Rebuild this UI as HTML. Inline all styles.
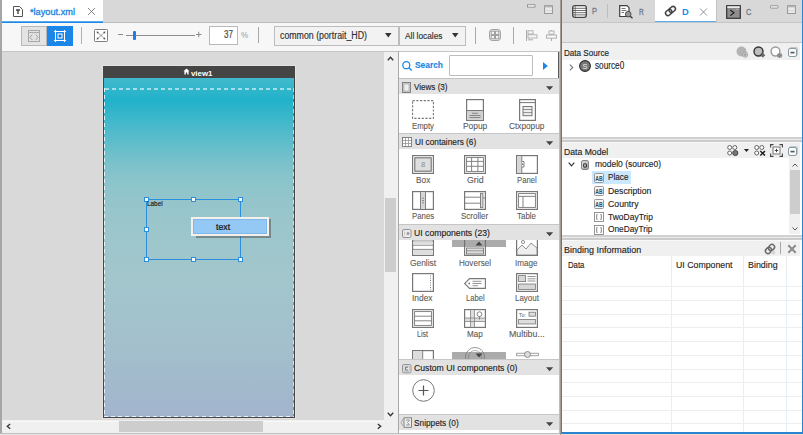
<!DOCTYPE html>
<html><head><meta charset="utf-8">
<style>
*{box-sizing:border-box;margin:0;padding:0}
html,body{width:803px;height:435px;overflow:hidden;background:#d9d9d9;font-family:"Liberation Sans",sans-serif;color:#333}
.a{position:absolute}
.t{position:absolute;white-space:nowrap;line-height:1;}
svg{position:absolute;overflow:visible}
</style></head><body>
<!-- LEFT EDITOR -->
<div class="a" style="left:0;top:0;width:2px;height:435px;background:#a6a6a6"></div>
<div class="a" style="left:2px;top:0;width:558px;height:22px;background:#d8d8d8"></div>
<!-- tab -->
<div class="a" style="left:2px;top:0;width:101px;height:21px;background:#fff"></div>
<div class="a" style="left:2px;top:21px;width:101px;height:2px;background:linear-gradient(#5aaaee 0 1px,#1c8ae5 1px 2px)"></div>
<div class="a" style="left:103px;top:22px;width:457px;height:1px;background:#bdbdbd"></div>
<!-- toolbar -->
<div class="a" style="left:2px;top:23px;width:558px;height:28px;background:#f7f7f7"></div>
<div class="a" style="left:2px;top:51px;width:558px;height:1px;background:#c4c4c4"></div>

<!-- tab content -->
<svg style="left:12px;top:5px" width="12" height="13" viewBox="0 0 12 13"><path d="M1.5 1.5 H7.5 L10.5 4.5 V11.5 H1.5 Z" fill="#fff" stroke="#555" stroke-width="1"/><path d="M4 5 H8 M6 5 V9" stroke="#444" stroke-width="1.4"/></svg>

<svg style="left:87px;top:7px" width="9" height="9" viewBox="0 0 9 9"><path d="M1 1 L8 8 M8 1 L1 8" stroke="#7a7a7a" stroke-width="0.9"/></svg>
<!-- toolbar content -->
<div class="a" style="left:21px;top:26px;width:26px;height:20px;background:#e3e3e3;border:1px solid #b8b8b8"></div>
<svg style="left:28px;top:30px" width="12" height="12" viewBox="0 0 12 12"><rect x="0.5" y="0.5" width="11" height="11" fill="none" stroke="#a6a6a6" stroke-width="1"/><path d="M0.5 2.6 H11.5" stroke="#a6a6a6" stroke-width="1"/><path d="M4.3 4.6 L1.8 7.3 L4.3 10 M7.7 4.6 L10.2 7.3 L7.7 10" fill="none" stroke="#a0a0a0" stroke-width="1"/></svg>
<div class="a" style="left:47px;top:26px;width:26px;height:20px;background:#1a86e8"></div>
<svg style="left:53px;top:29px" width="14" height="14" viewBox="0 0 14 14"><path d="M2.5 1 V13 M11.5 1 V13 M1 2.5 H13 M1 11.5 H13" stroke="#fff" stroke-width="1"/><rect x="5" y="5" width="4" height="4" fill="#1a86e8" stroke="#fff" stroke-width="1"/><rect x="6.3" y="6.3" width="1.4" height="1.4" fill="#0a5fb0"/><circle cx="2.5" cy="2.5" r="1" fill="#fff"/><circle cx="11.5" cy="2.5" r="1" fill="#fff"/><circle cx="2.5" cy="11.5" r="1" fill="#fff"/><circle cx="11.5" cy="11.5" r="1" fill="#fff"/></svg>
<div class="a" style="left:81px;top:27px;width:1px;height:17px;background:#b0b0b0"></div>
<svg style="left:94px;top:29px" width="14" height="13" viewBox="0 0 14 13"><rect x="0.5" y="0.5" width="13" height="12" rx="0.8" fill="#fff" stroke="#707070" stroke-width="0.9"/><path d="M3.5 3.2 L10.5 9.8 M10.5 3.2 L3.5 9.8" stroke="#707070" stroke-width="0.7"/><path d="M2.6 2.4 L5 2.9 L3.1 4.8 Z M11.4 2.4 L9 2.9 L10.9 4.8 Z M2.6 10.6 L5 10.1 L3.1 8.2 Z M11.4 10.6 L9 10.1 L10.9 8.2 Z" fill="#555"/></svg>
<div class="a" style="left:118px;top:34px;width:5px;height:1.3px;background:#8a8a8a"></div>
<div class="a" style="left:126px;top:35px;width:69px;height:1px;background:#8c8c8c"></div>
<div class="a" style="left:133px;top:31px;width:3px;height:9px;background:#1a80e6;border-radius:1px"></div>
<svg style="left:196px;top:31px" width="6" height="7" viewBox="0 0 6 7"><path d="M0 3.5 H5.5 M2.75 0.8 V6.2" stroke="#8a8a8a" stroke-width="1"/></svg>
<div class="a" style="left:209px;top:26px;width:29px;height:19px;background:#fff;border:1px solid #b9b9b9"></div>


<div class="a" style="left:258px;top:27px;width:1px;height:16px;background:#a9a9a9"></div>
<div class="a" style="left:274px;top:26px;width:125px;height:20px;background:#f2f2f2;border:1px solid #bcbcbc"></div>

<svg style="left:385px;top:33px" width="7" height="5" viewBox="0 0 7 5"><path d="M0 0 H6.5 L3.25 4.5 Z" fill="#333"/></svg>
<div class="a" style="left:399px;top:26px;width:67px;height:20px;background:#f2f2f2;border:1px solid #bcbcbc"></div>

<svg style="left:452px;top:33px" width="7" height="5" viewBox="0 0 7 5"><path d="M0 0 H6.5 L3.25 4.5 Z" fill="#333"/></svg>
<div class="a" style="left:475px;top:27px;width:1px;height:17px;background:#a9a9a9"></div>
<svg style="left:489px;top:29px" width="12" height="12" viewBox="0 0 12 12"><rect x="0.6" y="0.6" width="10.8" height="10.8" rx="2.5" fill="#f4f4f4" stroke="#999" stroke-width="1"/><rect x="2.2" y="2.2" width="3.3" height="3.3" fill="none" stroke="#999" stroke-width="0.9"/><rect x="6.5" y="2.2" width="3.3" height="3.3" fill="none" stroke="#999" stroke-width="0.9"/><rect x="2.2" y="6.5" width="3.3" height="3.3" fill="none" stroke="#999" stroke-width="0.9"/><rect x="6.5" y="6.5" width="3.3" height="3.3" fill="none" stroke="#999" stroke-width="0.9"/></svg>
<div class="a" style="left:513px;top:27px;width:1px;height:17px;background:#a9a9a9"></div>
<svg style="left:526px;top:30px" width="12" height="11" viewBox="0 0 12 11"><path d="M0.5 0 V11" stroke="#aaa"/><rect x="2" y="0.8" width="5" height="3.2" fill="none" stroke="#aaa" stroke-width="0.9"/><rect x="2" y="4.8" width="9" height="3.2" fill="none" stroke="#aaa" stroke-width="0.9"/><path d="M2 9.8 H7" stroke="#aaa"/></svg>
<svg style="left:546px;top:30px" width="11" height="11" viewBox="0 0 11 11"><path d="M5.5 0 V11" stroke="#aaa"/><rect x="3" y="1" width="5" height="3.2" fill="#f7f7f7" stroke="#aaa" stroke-width="0.9"/><rect x="0.5" y="5" width="10" height="3.2" fill="#f7f7f7" stroke="#aaa" stroke-width="0.9"/></svg>
<!-- min/max left -->
<svg style="left:527px;top:4px" width="9" height="4" viewBox="0 0 9 4"><rect x="0.5" y="0.7" width="7.5" height="2.4" fill="#f2f2f2" stroke="#888" stroke-width="0.8"/></svg>
<svg style="left:543.5px;top:4.5px" width="9" height="9" viewBox="0 0 9 9"><rect x="0.6" y="0.6" width="7.8" height="7.8" fill="#eaeaea" stroke="#8c8c8c" stroke-width="0.9"/><rect x="0.6" y="0.6" width="7.8" height="1.8" fill="#b5b5b5"/><path d="M0.6 5.5 H8.4" stroke="#c8c8c8" stroke-width="0.6"/></svg>

<!-- canvas -->
<div class="a" style="left:2px;top:52px;width:382px;height:368px;background:#d9d9d9"></div>
<!-- vertical scrollbar -->
<div class="a" style="left:384px;top:52px;width:14px;height:368px;background:#f0f0f0"></div>
<div class="a" style="left:385px;top:198px;width:11px;height:74px;background:#cdcdcd"></div>
<!-- horizontal scrollbar -->
<div class="a" style="left:2px;top:420px;width:396px;height:13px;background:#f0f0f0"></div><div class="a" style="left:2px;top:421px;width:382px;height:1px;background:#f8f8f8"></div>
<div class="a" style="left:119px;top:421px;width:144px;height:11px;background:#cdcdcd"></div>
<div class="a" style="left:0;top:433px;width:560px;height:1px;background:#c0c0c0"></div><div class="a" style="left:0;top:434px;width:560px;height:1px;background:#e4e4e4"></div>
<svg style="left:387px;top:56px" width="7" height="5" viewBox="0 0 7 5"><path d="M0.8 4.2 L3.5 1.2 L6.2 4.2" fill="none" stroke="#333" stroke-width="1.3"/></svg>
<svg style="left:387px;top:412px" width="7" height="5" viewBox="0 0 7 5"><path d="M0.8 0.8 L3.5 3.8 L6.2 0.8" fill="none" stroke="#333" stroke-width="1.3"/></svg>
<svg style="left:376.5px;top:423px" width="5" height="7" viewBox="0 0 5 7"><path d="M0.8 0.9 L3.7 3.3 L0.8 5.7" fill="none" stroke="#333" stroke-width="1.3"/></svg>
<svg style="left:5.5px;top:423px" width="5" height="7" viewBox="0 0 5 7"><path d="M4.2 0.9 L1.3 3.3 L4.2 5.7" fill="none" stroke="#333" stroke-width="1.3"/></svg>



<!-- phone frame -->
<div class="a" style="left:102px;top:65px;width:194px;height:354px;background:#e6e2e0"></div>
<div class="a" style="left:103px;top:66px;width:192px;height:352px;background:#454545"></div>
<div class="a" style="left:104px;top:78px;width:190px;height:339px;background:linear-gradient(to bottom,#42b9cc 0px,#36b7cb 8px,#20b2ca 22px,#4bbacb 50px,#74c0cb 80px,#8ac4cb 100px,#9ac6cb 140px,#a2c6cc 200px,#a3bfcc 270px,#a1b4cc 339px)"></div>
<div class="a" style="left:105px;top:88px;width:188px;height:2px;background:repeating-linear-gradient(to right,rgba(235,250,255,.6) 0 4px,transparent 4px 7px)"></div>
<div class="a" style="left:104px;top:88px;width:1px;height:329px;background:repeating-linear-gradient(to bottom,rgba(245,252,255,.85) 0 4px,transparent 4px 7px)"></div>
<div class="a" style="left:293px;top:88px;width:1px;height:329px;background:repeating-linear-gradient(to bottom,rgba(235,250,255,.6) 0 4px,rgba(40,60,70,.3) 4px 7px)"></div>
<div class="a" style="left:104px;top:416px;width:190px;height:1px;background:repeating-linear-gradient(to right,rgba(245,252,255,.85) 0 4px,transparent 4px 7px)"></div>

<svg style="left:183px;top:68px" width="7" height="7" viewBox="0 0 7 7"><path d="M3.5 0.5 L6.5 3.3 L5.6 3.3 L5.6 6.5 L4.2 6.5 L4.2 4.5 L2.8 4.5 L2.8 6.5 L1.4 6.5 L1.4 3.3 L0.5 3.3 Z" fill="#fff"/></svg>
<!-- selection -->
<div class="a" style="left:146px;top:199px;width:95px;height:61px;border:1px solid #2b8fe0"></div>

<div class="a" style="left:144px;top:197px;width:5px;height:5px;background:#fff;border:1px solid #2b8fe0"></div><div class="a" style="left:191px;top:197px;width:5px;height:5px;background:#fff;border:1px solid #2b8fe0"></div><div class="a" style="left:238px;top:197px;width:5px;height:5px;background:#fff;border:1px solid #2b8fe0"></div><div class="a" style="left:144px;top:227px;width:5px;height:5px;background:#fff;border:1px solid #2b8fe0"></div><div class="a" style="left:238px;top:227px;width:5px;height:5px;background:#fff;border:1px solid #2b8fe0"></div><div class="a" style="left:144px;top:257px;width:5px;height:5px;background:#fff;border:1px solid #2b8fe0"></div><div class="a" style="left:191px;top:257px;width:5px;height:5px;background:#fff;border:1px solid #2b8fe0"></div><div class="a" style="left:238px;top:257px;width:5px;height:5px;background:#fff;border:1px solid #2b8fe0"></div>
<div class="a" style="left:196px;top:219px;width:75px;height:19px;background:#555;opacity:.55"></div>
<div class="a" style="left:191px;top:217px;width:78px;height:19px;background:#fff6f0;border:2px solid #f4f0ec"></div>
<div class="a" style="left:193px;top:219px;width:74px;height:15px;background:#94c8f5;border:1px solid #80b8ee"></div>


<!-- palette -->
<div class="a" style="left:398px;top:51px;width:1px;height:382px;background:#a8a8a8"></div>
<div class="a" style="left:399px;top:52px;width:160px;height:381px;background:#fff"></div>
<div class="a" style="left:559px;top:51px;width:1px;height:382px;background:#bcbcbc"></div>

<!-- palette content -->
<svg style="left:402px;top:61px" width="11" height="10" viewBox="0 0 11 10"><circle cx="4.3" cy="4.2" r="3.5" fill="none" stroke="#1a8ae6" stroke-width="1.3"/><path d="M6.8 6.7 L9.8 9.5" stroke="#1a8ae6" stroke-width="1.5"/></svg>

<div class="a" style="left:449px;top:55px;width:84px;height:21px;background:#fff;border:1px solid #bdbdbd;border-radius:1px"></div>
<svg style="left:543px;top:62px" width="5" height="8" viewBox="0 0 5 8"><path d="M0 0 L4.8 4 L0 8 Z" fill="#1a86e8"/></svg>
<div class="a" style="left:399px;top:78px;width:160px;height:1px;background:#c2c2c2"></div>
<div class="a" style="left:399px;top:79px;width:160px;height:15px;background:#e2e2e2"></div>
<svg style="left:402px;top:82px" width="9" height="11" viewBox="0 0 9 11"><rect x="0.5" y="0.5" width="8" height="10" fill="#d0d0d0" stroke="#7a7a7a" stroke-width="0.9"/><rect x="2" y="2" width="5" height="7" fill="#eee" stroke="#999" stroke-width="0.6"/></svg>

<svg style="left:546px;top:86px" width="8" height="5" viewBox="0 0 8 5"><path d="M0 0.3 H7.2 L3.6 4.2 Z" fill="#444"/></svg>
<svg style="left:412.0px;top:100px" width="22" height="19" viewBox="0 0 22 19"><rect x="0.6" y="0.6" width="20.8" height="17.8" fill="#fff" stroke="#777" stroke-width="1.1" stroke-dasharray="2.2 1.5"/></svg><svg style="left:466px;top:99px" width="18" height="22" viewBox="0 0 18 22"><rect x="0.6" y="0.6" width="16.8" height="20.8" fill="#fff" stroke="#777" stroke-width="1.2"/><rect x="1.2" y="11.5" width="15.6" height="9.3" fill="#d0d0d0"/><path d="M1 11.5 H17" stroke="#777" stroke-width="1"/><path d="M6 14.3 H12 M3.5 16.5 H14.5 M3.5 18.5 H14.5" stroke="#777" stroke-width="0.8"/></svg><svg style="left:518.5px;top:99px" width="17" height="22" viewBox="0 0 17 22"><rect x="0.6" y="0.6" width="15.8" height="20.8" fill="#fff" stroke="#777" stroke-width="1.2"/><path d="M1 3.6 H16" stroke="#777" stroke-width="1"/><rect x="4" y="7.5" width="9" height="9.2" fill="#eee" stroke="#777" stroke-width="1"/><path d="M4 10.5 H13 M4 13.6 H13" stroke="#777" stroke-width="0.8"/></svg><div class="a" style="left:399px;top:133px;width:160px;height:1px;background:#c6c6c6"></div>
<div class="a" style="left:399px;top:134px;width:160px;height:15px;background:#e2e2e2"></div>
<svg style="left:402px;top:137px" width="10" height="10" viewBox="0 0 10 10"><rect x="0.5" y="0.5" width="9" height="9" fill="#fff" stroke="#777" stroke-width="0.9"/><path d="M3.5 0.5 V9.5 M6.5 0.5 V9.5 M0.5 3.5 H9.5 M0.5 6.5 H9.5" stroke="#888" stroke-width="0.7"/></svg>

<svg style="left:546px;top:141px" width="8" height="5" viewBox="0 0 8 5"><path d="M0 0.3 H7.2 L3.6 4.2 Z" fill="#444"/></svg>
<svg style="left:412.0px;top:155px" width="22" height="19" viewBox="0 0 22 19"><rect x="0.6" y="0.6" width="20.8" height="17.8" fill="#fff" stroke="#777" stroke-width="1.2"/><rect x="2.8" y="2.8" width="16.4" height="13.4" fill="#dedede" stroke="#666" stroke-width="1"/><text x="11" y="12.3" font-size="7.5" text-anchor="middle" fill="#8a8a8a" font-family="Liberation Sans">8</text></svg><svg style="left:464.0px;top:155px" width="22" height="19" viewBox="0 0 22 19"><rect x="0.6" y="0.6" width="20.8" height="17.8" fill="#fff" stroke="#777" stroke-width="1.2"/><rect x="2.6" y="2.6" width="16.8" height="13.8" fill="#fff" stroke="#777" stroke-width="0.9"/><path d="M7.6 2.6 V16.4 M13.9 2.6 V16.4 M2.6 6.4 H19.4 M2.6 11.3 H19.4" stroke="#777" stroke-width="0.9"/></svg><svg style="left:516.0px;top:155px" width="22" height="19" viewBox="0 0 22 19"><rect x="0.6" y="0.6" width="20.8" height="17.8" fill="#fff" stroke="#777" stroke-width="1.2"/><rect x="1.2" y="1.2" width="4.6" height="16.6" fill="#d6d6d6"/><path d="M5.8 1 V18" stroke="#777" stroke-width="0.9"/><path d="M5.8 6.5 H8 V12 H5.8" fill="#fff" stroke="#777" stroke-width="0.9"/><path d="M6.2 8 L7.5 9.2 L6.2 10.5 Z" fill="#555"/></svg><svg style="left:412.0px;top:191px" width="22" height="19" viewBox="0 0 22 19"><rect x="0.6" y="0.6" width="20.8" height="17.8" fill="#fff" stroke="#777" stroke-width="1.2"/><rect x="8.5" y="1.2" width="5" height="16.6" fill="#d6d6d6"/><path d="M8.5 1 V18 M13.5 1 V18" stroke="#777" stroke-width="0.9"/><path d="M10 7.2 H12 M10 9.5 H12 M10 11.8 H12" stroke="#777" stroke-width="0.8"/></svg><svg style="left:464.0px;top:191px" width="22" height="19" viewBox="0 0 22 19"><rect x="0.6" y="0.6" width="20.8" height="17.8" fill="#fff" stroke="#777" stroke-width="1.2"/><path d="M1 6.2 H16.5 M1 12.2 H16.5" stroke="#777" stroke-width="0.9"/><rect x="16.5" y="2.3" width="2.4" height="14.4" fill="#ddd" stroke="#777" stroke-width="0.9"/><path d="M19 7 H21" stroke="#777" stroke-width="0.9"/></svg><svg style="left:516.0px;top:191px" width="22" height="19" viewBox="0 0 22 19"><rect x="0.6" y="0.6" width="20.8" height="17.8" fill="#fff" stroke="#777" stroke-width="1.2"/><rect x="2.6" y="2.6" width="16.8" height="13.8" fill="#fff" stroke="#777" stroke-width="0.9"/><path d="M2.6 5.4 H19.4 M7 5.4 V16.4" stroke="#777" stroke-width="0.9"/></svg><div class="a" style="left:399px;top:240px;width:160px;height:120px;overflow:hidden"><div class="a" style="left:-399px;top:-240px;width:803px;height:435px"><svg style="left:412.0px;top:237px" width="22" height="19" viewBox="0 0 22 19"><rect x="0.6" y="0.6" width="20.8" height="17.8" fill="#fff" stroke="#777" stroke-width="1.2"/><path d="M1 4 H21 M1 8.2 H21 M1 12.4 H21" stroke="#777" stroke-width="0.9"/><rect x="2" y="4.5" width="18" height="3.2" fill="#ddd"/><rect x="2" y="12.9" width="18" height="4.5" fill="#ddd"/></svg><svg style="left:464.0px;top:237px" width="22" height="19" viewBox="0 0 22 19"><rect x="0.6" y="0.6" width="20.8" height="17.8" fill="#fff" stroke="#777" stroke-width="1.2"/><rect x="2.5" y="11" width="17" height="6" fill="#ddd" stroke="#777" stroke-width="0.9"/><path d="M2.5 13.8 H19.5" stroke="#777" stroke-width="0.7"/></svg><svg style="left:516.0px;top:237px" width="22" height="19" viewBox="0 0 22 19"><rect x="0.6" y="0.6" width="20.8" height="17.8" fill="#fff" stroke="#777" stroke-width="1.2"/><circle cx="7" cy="5" r="1.6" fill="none" stroke="#777" stroke-width="0.8"/><path d="M1 13 L6 8 L10 12 L15 6 L21 11 V18 H1 Z" fill="#eee" stroke="#777" stroke-width="0.8"/></svg><svg style="left:412.0px;top:273px" width="22" height="19" viewBox="0 0 22 19"><rect x="0.6" y="0.6" width="20.8" height="17.8" fill="#fff" stroke="#777" stroke-width="1.2"/><path d="M18.5 2.5 V17" stroke="#777" stroke-width="0.9" stroke-dasharray="1 1.3"/></svg><svg style="left:464px;top:277.5px" width="22" height="11" viewBox="0 0 22 11"><path d="M5.6 0.6 H21.4 V10.4 H5.6 L0.6 5.5 Z" fill="#fff" stroke="#777" stroke-width="1.1"/><circle cx="5.2" cy="5.5" r="0.9" fill="#777"/><path d="M8.5 3.3 H17.5 M8.5 5.5 H17.5 M8.5 7.7 H14" stroke="#777" stroke-width="0.8"/></svg><svg style="left:516.0px;top:273px" width="22" height="19" viewBox="0 0 22 19"><rect x="0.6" y="0.6" width="20.8" height="17.8" fill="#fff" stroke="#777" stroke-width="1.2"/><rect x="2.6" y="2.6" width="7" height="6" fill="#d6d6d6" stroke="#777" stroke-width="0.8"/><path d="M11.5 3.5 H19.5 M11.5 5.8 H19.5 M11.5 8 H19.5" stroke="#777" stroke-width="0.8"/><rect x="2.6" y="11" width="16.8" height="5.5" fill="#d6d6d6" stroke="#777" stroke-width="0.8"/></svg><svg style="left:412.0px;top:309px" width="22" height="19" viewBox="0 0 22 19"><rect x="0.6" y="0.6" width="20.8" height="17.8" fill="#fff" stroke="#777" stroke-width="1.2"/><rect x="2.6" y="2.6" width="16.8" height="13.8" fill="#fff" stroke="#777" stroke-width="0.9"/><path d="M2.6 7.2 H19.4 M2.6 11.8 H19.4" stroke="#777" stroke-width="0.9"/></svg><svg style="left:464.0px;top:309px" width="22" height="19" viewBox="0 0 22 19"><rect x="0.6" y="0.6" width="20.8" height="17.8" fill="#fff" stroke="#777" stroke-width="1.2"/><rect x="6.5" y="1.2" width="4" height="16.6" fill="#ddd"/><rect x="1.2" y="9" width="19.6" height="3.5" fill="#ddd"/><path d="M6.5 1 V18 M10.5 1 V18 M1 9 H21 M1 12.5 H21" stroke="#777" stroke-width="0.7"/><circle cx="15.5" cy="5.2" r="2.4" fill="#fff" stroke="#777" stroke-width="0.9"/><path d="M15.5 7.6 V10.5" stroke="#777" stroke-width="0.9"/></svg><svg style="left:516.0px;top:309px" width="22" height="19" viewBox="0 0 22 19"><rect x="0.6" y="0.6" width="20.8" height="17.8" fill="#fff" stroke="#777" stroke-width="1.2"/><text x="2.8" y="8" font-size="5.5" fill="#666" font-family="Liberation Sans">To:</text><rect x="13" y="3.2" width="6.5" height="4" fill="#ddd" stroke="#777" stroke-width="0.8"/><rect x="2.6" y="10.5" width="16.8" height="4.5" fill="#ddd" stroke="#777" stroke-width="0.8"/></svg><svg style="left:412.0px;top:349.5px" width="22" height="19" viewBox="0 0 22 19"><rect x="0.6" y="0.6" width="20.8" height="17.8" fill="#fff" stroke="#777" stroke-width="1.2"/><rect x="1.2" y="1.2" width="9.5" height="16.6" fill="#ddd"/><path d="M10.7 1 V18" stroke="#777" stroke-width="0.9"/></svg><svg style="left:463px;top:345.5px" width="24" height="16" viewBox="0 0 24 16"><circle cx="12" cy="11" r="9.5" fill="none" stroke="#999" stroke-width="1"/><circle cx="12" cy="11" r="6.5" fill="none" stroke="#aaa" stroke-width="0.9"/></svg><svg style="left:515.5px;top:351px" width="23" height="7" viewBox="0 0 23 7"><path d="M0.5 2.3 H22.5 V4.7 H0.5 Z" fill="#fff" stroke="#888" stroke-width="0.8"/><circle cx="11.5" cy="3.5" r="3" fill="#ddd" stroke="#777" stroke-width="0.8"/></svg><div class="a" style="left:452px;top:240px;width:54px;height:7px;background:rgba(110,110,110,.58)"></div><svg style="left:475px;top:241px" width="8" height="5" viewBox="0 0 8 5"><path d="M0.5 4.5 L4 0.5 L7.5 4.5 Z" fill="#444"/></svg><div class="a" style="left:452px;top:352px;width:54px;height:7px;background:rgba(110,110,110,.58)"></div><svg style="left:475px;top:353px" width="8" height="5" viewBox="0 0 8 5"><path d="M0.5 0.5 L7.5 0.5 L4 4.5 Z" fill="#444"/></svg></div></div><div class="a" style="left:399px;top:224px;width:160px;height:1px;background:#c6c6c6"></div>
<div class="a" style="left:399px;top:225px;width:160px;height:15px;background:#e2e2e2"></div>
<svg style="left:402px;top:228.5px" width="10" height="9" viewBox="0 0 10 9"><rect x="0.5" y="0.5" width="8.5" height="8" rx="1.5" fill="#ececec" stroke="#8a8a8a" stroke-width="0.9"/><path d="M6 2.5 L7.8 4.5 L6 6.5 L4.2 4.5 Z" fill="#9a9a9a"/><path d="M2.5 2.5 V6.5" stroke="#bbb" stroke-width="0.7"/></svg>

<svg style="left:546px;top:232px" width="8" height="5" viewBox="0 0 8 5"><path d="M0 0.3 H7.2 L3.6 4.2 Z" fill="#444"/></svg>
<div class="a" style="left:399px;top:359px;width:160px;height:1px;background:#c6c6c6"></div>
<div class="a" style="left:399px;top:360px;width:160px;height:15px;background:#e2e2e2"></div>
<svg style="left:402px;top:363.5px" width="10" height="9" viewBox="0 0 10 9"><rect x="0.5" y="0.5" width="8.5" height="8.3" rx="1.3" fill="#e9e9e9" stroke="#8a8a8a" stroke-width="0.9"/><rect x="2" y="2" width="5.5" height="5.3" fill="none" stroke="#b0b0b0" stroke-width="0.6"/><path d="M6.2 3.2 H3.6 V6.1 H6.2" fill="none" stroke="#666" stroke-width="0.9"/></svg>

<svg style="left:546px;top:367px" width="8" height="5" viewBox="0 0 8 5"><path d="M0 0.3 H7.2 L3.6 4.2 Z" fill="#444"/></svg>
<svg style="left:411.5px;top:378.5px" width="23" height="23" viewBox="0 0 23 23"><circle cx="11.5" cy="11.5" r="10.8" fill="#fff" stroke="#777" stroke-width="1"/><path d="M11.5 6.5 V16.5 M6.5 11.5 H16.5" stroke="#555" stroke-width="1.2"/></svg><div class="a" style="left:399px;top:414px;width:160px;height:1px;background:#c6c6c6"></div>
<div class="a" style="left:399px;top:415px;width:160px;height:15px;background:#e2e2e2"></div>
<svg style="left:400px;top:417px" width="13" height="11" viewBox="0 0 13 11"><path d="M3 2 L1 5.5 L3 9" fill="none" stroke="#999" stroke-width="0.8"/><rect x="4" y="0.8" width="7.5" height="9.5" fill="#eee" stroke="#777" stroke-width="0.9"/><path d="M6 3 H9.5 L7.5 5.5 L9.5 8 H6" fill="none" stroke="#777" stroke-width="0.7"/></svg>

<svg style="left:546px;top:422px" width="8" height="5" viewBox="0 0 8 5"><path d="M0 0.3 H7.2 L3.6 4.2 Z" fill="#444"/></svg>

<div class="a" style="left:558px;top:52px;width:1px;height:26px;background:#5a5a5a"></div>
<!-- RIGHT PANEL -->
<div class="a" style="left:560px;top:0;width:1px;height:435px;background:#a39a94"></div>



<div class="a" style="left:562px;top:0;width:240px;height:22px;background:#d8d8d8"></div>
<div class="a" style="left:655px;top:0;width:61px;height:21px;background:#fff"></div>
<div class="a" style="left:655px;top:21px;width:61px;height:2px;background:linear-gradient(#5aaaee 0 1px,#1c8ae5 1px 2px)"></div>
<div class="a" style="left:562px;top:22px;width:240px;height:1px;background:#c6c6c6"></div>
<div class="a" style="left:562px;top:23px;width:240px;height:19px;background:#e4e4e4"></div>
<div class="a" style="left:562px;top:42px;width:240px;height:1px;background:#c4c4c4"></div>
<div class="a" style="left:562px;top:43px;width:240px;height:389px;background:#fff"></div>
<!-- right content -->
<svg style="left:572px;top:5px" width="15" height="13" viewBox="0 0 15 13"><rect x="0.7" y="0.7" width="13.6" height="11.6" rx="2" fill="#fff" stroke="#444" stroke-width="1.3"/><path d="M1 3.3 H14 M1 5.5 H14 M1 7.7 H14 M1 9.9 H14" stroke="#3a3a3a" stroke-width="0.75"/><path d="M3.2 1 V12" stroke="#555" stroke-width="0.7"/></svg>

<div class="a" style="left:607px;top:4px;width:1px;height:14px;background:#bdbdbd"></div>
<svg style="left:619px;top:5px" width="15" height="14" viewBox="0 0 15 14"><path d="M0.7 0.7 H8 L10 2.7 V11.5 H0.7 Z" fill="#fff" stroke="#3f3f3f" stroke-width="1.2"/><path d="M2.5 3.5 H6.5 M2.5 5.5 H7.5 M2.5 7.5 H5" stroke="#555" stroke-width="0.8"/><circle cx="9.2" cy="9.2" r="2.8" fill="#9a9a9a" stroke="#444" stroke-width="0.9"/><path d="M11.2 11.2 L13.5 13.3" stroke="#333" stroke-width="1.3"/></svg>

<div class="a" style="left:716px;top:0;width:1px;height:22px;background:#c2c2c2"></div>
<svg style="left:664px;top:5px" width="13" height="12" viewBox="0 0 13 12"><g transform="rotate(-40 6.5 6)"><rect x="0.8" y="3.6" width="6.8" height="4.8" rx="2.4" fill="none" stroke="#444" stroke-width="1.5"/><rect x="5.4" y="3.6" width="6.8" height="4.8" rx="2.4" fill="none" stroke="#444" stroke-width="1.5"/></g></svg>

<svg style="left:699px;top:7.5px" width="9" height="8" viewBox="0 0 9 8"><path d="M1 0.5 L8 7.5 M8 0.5 L1 7.5" stroke="#888" stroke-width="0.9"/></svg>
<svg style="left:725.5px;top:4.5px" width="15" height="14" viewBox="0 0 15 14"><rect x="0.7" y="0.7" width="13.6" height="12.6" fill="#8e8e8e" stroke="#333" stroke-width="1.2"/><rect x="1.3" y="1.3" width="12.4" height="1.6" fill="#f4f4f4"/><path d="M4.3 5 L8 7.8 L4.3 10.6" fill="none" stroke="#1a1a1a" stroke-width="1.1"/><path d="M10.5 4.5 h1.5" stroke="#ddd" stroke-width="0.6"/></svg>

<svg style="left:770px;top:4.5px" width="9" height="4" viewBox="0 0 9 4"><rect x="0.5" y="0.7" width="7.5" height="2.4" rx="0.5" fill="#f2f2f2" stroke="#888" stroke-width="0.8"/></svg>
<svg style="left:786.5px;top:4.5px" width="9" height="9" viewBox="0 0 9 9"><rect x="0.6" y="0.6" width="7.8" height="7.8" fill="#eaeaea" stroke="#8c8c8c" stroke-width="0.9"/><rect x="0.6" y="0.6" width="7.8" height="1.8" fill="#b5b5b5"/><path d="M0.6 5.5 H8.4" stroke="#c8c8c8" stroke-width="0.6"/></svg>
<div class="a" style="left:562px;top:43px;width:238px;height:16.5px;background:#f0f0f0"></div><svg style="left:736px;top:46px" width="13" height="12" viewBox="0 0 13 12"><circle cx="5.5" cy="5.5" r="5" fill="#b3b3b3"/><circle cx="9.2" cy="8.7" r="2.6" fill="#c8c8c8" stroke="#999" stroke-width="0.6"/><path d="M9.2 7.5 V9.9 M8 8.7 H10.4" stroke="#888" stroke-width="0.6"/></svg>
<svg style="left:753px;top:46px" width="13" height="12" viewBox="0 0 13 12"><circle cx="5.5" cy="5.5" r="4.5" fill="#bdbdbd" stroke="#333" stroke-width="1.4"/><path d="M7.3 8.8 L9.3 6.8 L11.8 9.3 L9.8 11.3 Z" fill="#666" stroke="#444" stroke-width="0.6"/></svg>
<svg style="left:769.5px;top:46px" width="13" height="12" viewBox="0 0 13 12"><circle cx="5.5" cy="5.5" r="4.4" fill="#fff" stroke="#9c9c9c" stroke-width="1.5"/><path d="M7.6 7.6 L11.6 11.4 M11.6 7.6 L7.6 11.4 M9.6 7 V12 M7 9.5 H12.2" stroke="#8a8a8a" stroke-width="1.3"/></svg>
<svg style="left:787.5px;top:47.0px" width="10" height="10" viewBox="0 0 10 10"><rect x="1.5" y="0.5" width="8" height="8" rx="1.5" fill="#e4eaec" stroke="#a9b8bd" stroke-width="0.7"/><rect x="0.5" y="1.5" width="8" height="8" rx="1.5" fill="#fafafa" stroke="#7b9198" stroke-width="0.9"/><rect x="2.5" y="4.8" width="4" height="1.6" fill="#555"/></svg>
<svg style="left:569px;top:64px" width="5" height="7" viewBox="0 0 5 7"><path d="M0.8 0.6 L3.8 3.5 L0.8 6.4" fill="none" stroke="#777" stroke-width="1.1"/></svg>
<svg style="left:579px;top:60px" width="12" height="12" viewBox="0 0 12 12"><circle cx="6" cy="6" r="5.4" fill="#777" stroke="#2a2a2a" stroke-width="1.1"/><text x="6" y="8.6" font-size="7.5" text-anchor="middle" fill="#e8e8e8" font-family="Liberation Sans">S</text></svg>

<div class="a" style="left:562px;top:137px;width:240px;height:2px;background:#d0d0d0"></div><div class="a" style="left:562px;top:139px;width:240px;height:1px;background:#ececec"></div><div class="a" style="left:562px;top:140px;width:240px;height:2px;background:#cbcbcb"></div><div class="a" style="left:562px;top:142px;width:240px;height:1px;background:#f8f8f8"></div><div class="a" style="left:562px;top:143px;width:238px;height:15px;background:#f0f0f0"></div><svg style="left:727px;top:145px" width="12" height="11" viewBox="0 0 12 11"><circle cx="2.7" cy="2.5" r="2" fill="#fff" stroke="#555" stroke-width="0.9"/><circle cx="7.8" cy="2.5" r="2" fill="#fff" stroke="#555" stroke-width="0.9"/><circle cx="2.7" cy="8" r="2" fill="#fff" stroke="#555" stroke-width="0.9"/><circle cx="8.3" cy="8" r="2.6" fill="#777" stroke="#333" stroke-width="0.8"/></svg>
<svg style="left:743.5px;top:148.5px" width="6" height="4" viewBox="0 0 6 4"><path d="M0 0 H5 L2.5 3 Z" fill="#222"/></svg>
<svg style="left:754px;top:145px" width="12" height="11" viewBox="0 0 12 11"><circle cx="2.7" cy="2.5" r="2" fill="#fff" stroke="#555" stroke-width="0.9"/><circle cx="7.8" cy="2.5" r="2" fill="#fff" stroke="#555" stroke-width="0.9"/><circle cx="2.7" cy="8" r="2" fill="#fff" stroke="#555" stroke-width="0.9"/><path d="M6.3 6 L11 10.5 M11 6 L6.3 10.5" stroke="#222" stroke-width="1.5"/></svg>
<svg style="left:770px;top:144px" width="13" height="13" viewBox="0 0 13 13"><path d="M0.6 3.5 V0.6 H3.5 M9.5 0.6 H12.4 V3.5 M12.4 9.5 V12.4 H9.5 M3.5 12.4 H0.6 V9.5" fill="none" stroke="#444" stroke-width="1.1"/><rect x="3" y="3" width="7" height="7" fill="#fff" stroke="#555" stroke-width="0.8"/><path d="M6.5 4.8 V8.2 M4.8 6.5 H8.2" stroke="#333" stroke-width="0.9"/></svg>
<svg style="left:787.5px;top:146.0px" width="10" height="10" viewBox="0 0 10 10"><rect x="1.5" y="0.5" width="8" height="8" rx="1.5" fill="#e4eaec" stroke="#a9b8bd" stroke-width="0.7"/><rect x="0.5" y="1.5" width="8" height="8" rx="1.5" fill="#fafafa" stroke="#7b9198" stroke-width="0.9"/><rect x="2.5" y="4.8" width="4" height="1.6" fill="#555"/></svg>
<svg style="left:567.5px;top:162px" width="7" height="5" viewBox="0 0 7 5"><path d="M0.7 0.7 L3.5 3.8 L6.3 0.7" fill="none" stroke="#333" stroke-width="1.2"/></svg>
<svg style="left:581px;top:159.5px" width="8" height="10" viewBox="0 0 8 10"><defs><linearGradient id="mg" x1="0" y1="0" x2="0" y2="1"><stop offset="0" stop-color="#d0d0d0"/><stop offset="1" stop-color="#a8a8a8"/></linearGradient></defs><rect x="0.5" y="0.5" width="7" height="9" rx="1.6" fill="url(#mg)" stroke="#777" stroke-width="0.9"/><circle cx="4" cy="5.5" r="1.7" fill="#bbb" stroke="#333" stroke-width="1.1"/><path d="M1.6 1.5 V8.5" stroke="#eee" stroke-width="0.6"/></svg>

<div class="a" style="left:592px;top:171px;width:39px;height:13px;background:#cce8ff"></div>
<svg style="left:594px;top:172.5px" width="10" height="10" viewBox="0 0 10 10"><rect x="0.5" y="0.5" width="9" height="9" rx="1" fill="#f4f4f4" stroke="#8a8a8a" stroke-width="0.9"/><text x="1.3" y="8.4" font-size="7.2" font-weight="bold" fill="#34495a" font-family="Liberation Sans" textLength="7.4" lengthAdjust="spacingAndGlyphs">AB</text></svg><svg style="left:594px;top:185.7px" width="10" height="10" viewBox="0 0 10 10"><rect x="0.5" y="0.5" width="9" height="9" rx="1" fill="#f4f4f4" stroke="#8a8a8a" stroke-width="0.9"/><text x="1.3" y="8.4" font-size="7.2" font-weight="bold" fill="#34495a" font-family="Liberation Sans" textLength="7.4" lengthAdjust="spacingAndGlyphs">AB</text></svg><svg style="left:594px;top:198.7px" width="10" height="10" viewBox="0 0 10 10"><rect x="0.5" y="0.5" width="9" height="9" rx="1" fill="#f4f4f4" stroke="#8a8a8a" stroke-width="0.9"/><text x="1.3" y="8.4" font-size="7.2" font-weight="bold" fill="#34495a" font-family="Liberation Sans" textLength="7.4" lengthAdjust="spacingAndGlyphs">AB</text></svg><svg style="left:594px;top:211.7px" width="10" height="10" viewBox="0 0 10 10"><rect x="0.5" y="0.5" width="9" height="9" fill="#fff" stroke="#888" stroke-width="0.9"/><path d="M3.6 2.6 H2.7 V7.4 H3.6 M6.4 2.6 H7.3 V7.4 H6.4" fill="none" stroke="#555" stroke-width="0.7"/></svg><svg style="left:594px;top:224.5px" width="10" height="10" viewBox="0 0 10 10"><rect x="0.5" y="0.5" width="9" height="9" fill="#fff" stroke="#888" stroke-width="0.9"/><path d="M3.6 2.6 H2.7 V7.4 H3.6 M6.4 2.6 H7.3 V7.4 H6.4" fill="none" stroke="#555" stroke-width="0.7"/></svg><div class="a" style="left:789px;top:158px;width:11px;height:76px;background:#f0f0f0"></div>
<div class="a" style="left:790px;top:170px;width:10px;height:44px;background:#cdcdcd"></div>
<svg style="left:792px;top:162.5px" width="6" height="4" viewBox="0 0 6 4"><path d="M0.5 3.5 L3 1 L5.5 3.5" fill="none" stroke="#444" stroke-width="0.9"/></svg>
<svg style="left:792px;top:226.5px" width="6" height="4" viewBox="0 0 6 4"><path d="M0.5 0.5 L3 3 L5.5 0.5" fill="none" stroke="#444" stroke-width="0.9"/></svg>
<div class="a" style="left:562px;top:235px;width:240px;height:2px;background:#d0d0d0"></div><div class="a" style="left:562px;top:237px;width:240px;height:1px;background:#ececec"></div><div class="a" style="left:562px;top:238px;width:240px;height:2px;background:#cbcbcb"></div><div class="a" style="left:562px;top:240px;width:240px;height:1px;background:#f8f8f8"></div><div class="a" style="left:562px;top:241px;width:238px;height:15px;background:#f0f0f0"></div><svg style="left:764px;top:242.5px" width="12" height="12" viewBox="0 0 12 12"><g transform="rotate(-45 6 6)"><rect x="0.6" y="3.4" width="6.6" height="5.2" rx="2.6" fill="none" stroke="#6a6a6a" stroke-width="1.5"/><rect x="4.8" y="3.4" width="6.6" height="5.2" rx="2.6" fill="none" stroke="#6a6a6a" stroke-width="1.5"/></g><circle cx="9.3" cy="9.5" r="2" fill="#d4d4d4"/></svg>
<div class="a" style="left:780px;top:242px;width:1px;height:12px;background:#a8a8a8"></div>
<svg style="left:787px;top:243.5px" width="10" height="10" viewBox="0 0 10 10"><path d="M1.3 1.3 L8.7 8.7 M8.7 1.3 L1.3 8.7" stroke="#8c8c8c" stroke-width="2.1"/></svg>
<div class="a" style="left:671px;top:256px;width:1px;height:18px;background:#ebebeb"></div><div class="a" style="left:671px;top:274px;width:1px;height:158px;background:#e6eef9"></div><div class="a" style="left:743px;top:256px;width:1px;height:18px;background:#ebebeb"></div><div class="a" style="left:743px;top:274px;width:1px;height:158px;background:#e6eef9"></div><div class="a" style="left:786px;top:256px;width:1px;height:18px;background:#ebebeb"></div><div class="a" style="left:786px;top:274px;width:1px;height:158px;background:#e6eef9"></div><div class="a" style="left:562px;top:286px;width:240px;height:1px;background:#eeeeee"></div><div class="a" style="left:562px;top:300px;width:240px;height:1px;background:#eeeeee"></div><div class="a" style="left:562px;top:314px;width:240px;height:1px;background:#eeeeee"></div><div class="a" style="left:562px;top:327px;width:240px;height:1px;background:#eeeeee"></div><div class="a" style="left:562px;top:341px;width:240px;height:1px;background:#eeeeee"></div><div class="a" style="left:562px;top:355px;width:240px;height:1px;background:#eeeeee"></div><div class="a" style="left:562px;top:369px;width:240px;height:1px;background:#eeeeee"></div><div class="a" style="left:562px;top:382px;width:240px;height:1px;background:#eeeeee"></div><div class="a" style="left:562px;top:396px;width:240px;height:1px;background:#eeeeee"></div><div class="a" style="left:562px;top:410px;width:240px;height:1px;background:#eeeeee"></div><div class="a" style="left:562px;top:423px;width:240px;height:1px;background:#eeeeee"></div>
<div class="a" style="left:561px;top:0;width:1px;height:434px;background:#2a86d4"></div>
<div class="a" style="left:802px;top:0;width:1px;height:434px;background:#2a86d4"></div>
<div class="a" style="left:561px;top:432px;width:242px;height:2px;background:#2a84d0"></div>
<div class="a" style="left:561px;top:434px;width:242px;height:1px;background:#f2dccf"></div>
<!-- TEXT -->
<div class="t" style="left:29.50px;top:8.00px;font-size:8.94px;color:#1b84dc;-webkit-text-stroke:0.3px #1b84dc;transform:scaleX(1.0295);transform-origin:0 0">*layout.xml</div>
<div class="t" style="left:223.70px;top:30.00px;font-size:10.17px;color:#4a4a4a;-webkit-text-stroke:0.2px #4a4a4a;transform:scaleX(0.7909);transform-origin:0 0">37</div>
<div class="t" style="left:241.40px;top:31.00px;font-size:9.16px;color:#a8a8a8;-webkit-text-stroke:0.1px #a8a8a8;transform:scaleX(0.8750);transform-origin:0 0">%</div>
<div class="t" style="left:280.00px;top:31.00px;font-size:10.21px;color:#2f2f2f;-webkit-text-stroke:0.15px #2f2f2f;transform:scaleX(0.8614);transform-origin:0 0">common (portrait_HD)</div>
<div class="t" style="left:405.00px;top:32.00px;font-size:9.22px;color:#2f2f2f;-webkit-text-stroke:0.15px #2f2f2f;transform:scaleX(0.9024);transform-origin:0 0">All locales</div>
<div class="t" style="left:191.00px;top:70.00px;font-size:8.09px;color:#ffffff;font-weight:bold;transform:scaleX(0.9727);transform-origin:0 0">view1</div>
<div class="t" style="left:147.40px;top:201.00px;font-size:6.69px;color:#1a1a1a;-webkit-text-stroke:0.15px #1a1a1a;transform:scaleX(0.9562);transform-origin:0 0">Label</div>
<div class="t" style="left:216.20px;top:222.00px;font-size:9.44px;color:#111111;-webkit-text-stroke:0.2px #111111;transform:scaleX(0.9333);transform-origin:0 0">text</div>
<div class="t" style="left:414.90px;top:61.00px;font-size:9.16px;color:#1b87e5;font-weight:bold;-webkit-text-stroke:0.15px #1b87e5;transform:scaleX(0.9133);transform-origin:0 0">Search</div>
<div class="t" style="left:414.10px;top:83.00px;font-size:9.16px;color:#1f1f1f;-webkit-text-stroke:0.15px #1f1f1f;transform:scaleX(0.8816);transform-origin:0 0">Views (3)</div>
<div class="t" style="left:414.70px;top:138.00px;font-size:9.16px;color:#1f1f1f;-webkit-text-stroke:0.15px #1f1f1f;transform:scaleX(0.9044);transform-origin:0 0">UI containers (6)</div>
<div class="t" style="left:413.80px;top:229.00px;font-size:9.16px;color:#1f1f1f;-webkit-text-stroke:0.15px #1f1f1f;transform:scaleX(0.9450);transform-origin:0 0">UI components (23)</div>
<div class="t" style="left:414.40px;top:364.00px;font-size:9.16px;color:#1f1f1f;-webkit-text-stroke:0.15px #1f1f1f;transform:scaleX(0.9450);transform-origin:0 0">Custom UI components (0)</div>
<div class="t" style="left:414.40px;top:419.00px;font-size:9.16px;color:#1f1f1f;-webkit-text-stroke:0.15px #1f1f1f;transform:scaleX(0.9041);transform-origin:0 0">Snippets (0)</div>
<div class="t" style="left:591.90px;top:7.00px;font-size:8.87px;color:#6f7b8d;-webkit-text-stroke:0.3px #6f7b8d;transform:scaleX(0.8500);transform-origin:0 0">P</div>
<div class="t" style="left:639.00px;top:8.00px;font-size:8.87px;color:#6f7b8d;-webkit-text-stroke:0.3px #6f7b8d;transform:scaleX(0.7500);transform-origin:0 0">R</div>
<div class="t" style="left:681.80px;top:8.00px;font-size:9.01px;color:#1b8ae6;font-weight:bold;transform:scaleX(1.0333);transform-origin:0 0">D</div>
<div class="t" style="left:745.50px;top:8.00px;font-size:9.30px;color:#6f7b8d;-webkit-text-stroke:0.3px #6f7b8d;transform:scaleX(0.8000);transform-origin:0 0">C</div>
<div class="t" style="left:563.80px;top:49.00px;font-size:9.30px;color:#1f1f1f;-webkit-text-stroke:0.15px #1f1f1f;transform:scaleX(0.8692);transform-origin:0 0">Data Source</div>
<div class="t" style="left:594.70px;top:61.00px;font-size:10.02px;color:#1f1f1f;-webkit-text-stroke:0.15px #1f1f1f;transform:scaleX(0.8194);transform-origin:0 0">source0</div>
<div class="t" style="left:563.90px;top:148.00px;font-size:9.30px;color:#1f1f1f;-webkit-text-stroke:0.15px #1f1f1f;transform:scaleX(0.9298);transform-origin:0 0">Data Model</div>
<div class="t" style="left:594.60px;top:160.00px;font-size:9.22px;color:#1f1f1f;-webkit-text-stroke:0.15px #1f1f1f;transform:scaleX(0.9194);transform-origin:0 0">model0 (source0)</div>
<div class="t" style="left:608.40px;top:173.00px;font-size:9.30px;color:#1f1f1f;-webkit-text-stroke:0.15px #1f1f1f;transform:scaleX(0.8783);transform-origin:0 0">Place</div>
<div class="t" style="left:608.40px;top:187.00px;font-size:9.30px;color:#1f1f1f;-webkit-text-stroke:0.15px #1f1f1f;transform:scaleX(0.9304);transform-origin:0 0">Description</div>
<div class="t" style="left:608.40px;top:200.00px;font-size:9.30px;color:#1f1f1f;-webkit-text-stroke:0.15px #1f1f1f;transform:scaleX(0.9364);transform-origin:0 0">Country</div>
<div class="t" style="left:608.40px;top:213.00px;font-size:9.30px;color:#1f1f1f;-webkit-text-stroke:0.15px #1f1f1f;transform:scaleX(0.9122);transform-origin:0 0">TwoDayTrip</div>
<div class="t" style="left:608.40px;top:225.00px;font-size:9.30px;color:#1f1f1f;-webkit-text-stroke:0.15px #1f1f1f;transform:scaleX(0.8940);transform-origin:0 0">OneDayTrip</div>
<div class="t" style="left:563.70px;top:245.00px;font-size:9.45px;color:#1f1f1f;-webkit-text-stroke:0.15px #1f1f1f;transform:scaleX(0.9506);transform-origin:0 0">Binding Information</div>
<div class="t" style="left:568.20px;top:260.00px;font-size:9.45px;color:#1f1f1f;-webkit-text-stroke:0.15px #1f1f1f;transform:scaleX(0.8250);transform-origin:0 0">Data</div>
<div class="t" style="left:676.00px;top:260.00px;font-size:9.45px;color:#1f1f1f;-webkit-text-stroke:0.15px #1f1f1f;transform:scaleX(0.9279);transform-origin:0 0">UI Component</div>
<div class="t" style="left:748.30px;top:260.00px;font-size:9.45px;color:#1f1f1f;-webkit-text-stroke:0.15px #1f1f1f;transform:scaleX(0.9387);transform-origin:0 0">Binding</div>
<div class="t" style="left:412.00px;top:122.00px;font-size:9.30px;color:#5a5a5a;-webkit-text-stroke:0.1px #5a5a5a;transform:scaleX(0.8333);transform-origin:0 0">Empty</div>
<div class="t" style="left:462.60px;top:122.00px;font-size:9.30px;color:#5a5a5a;-webkit-text-stroke:0.1px #5a5a5a;transform:scaleX(0.9037);transform-origin:0 0">Popup</div>
<div class="t" style="left:509.00px;top:122.00px;font-size:9.30px;color:#5a5a5a;-webkit-text-stroke:0.1px #5a5a5a;transform:scaleX(0.8900);transform-origin:0 0">Ctxpopup</div>
<div class="t" style="left:416.20px;top:176.00px;font-size:9.30px;color:#5a5a5a;-webkit-text-stroke:0.1px #5a5a5a;transform:scaleX(0.8938);transform-origin:0 0">Box</div>
<div class="t" style="left:466.80px;top:176.00px;font-size:9.30px;color:#5a5a5a;-webkit-text-stroke:0.1px #5a5a5a;transform:scaleX(0.9471);transform-origin:0 0">Grid</div>
<div class="t" style="left:516.70px;top:176.00px;font-size:9.30px;color:#5a5a5a;-webkit-text-stroke:0.1px #5a5a5a;transform:scaleX(0.8333);transform-origin:0 0">Panel</div>
<div class="t" style="left:412.00px;top:212.00px;font-size:9.30px;color:#5a5a5a;-webkit-text-stroke:0.1px #5a5a5a;transform:scaleX(0.8462);transform-origin:0 0">Panes</div>
<div class="t" style="left:461.00px;top:212.00px;font-size:9.30px;color:#5a5a5a;-webkit-text-stroke:0.1px #5a5a5a;transform:scaleX(0.8625);transform-origin:0 0">Scroller</div>
<div class="t" style="left:517.00px;top:212.00px;font-size:9.30px;color:#5a5a5a;-webkit-text-stroke:0.1px #5a5a5a;transform:scaleX(0.8545);transform-origin:0 0">Table</div>
<div class="t" style="left:409.80px;top:259.00px;font-size:9.30px;color:#5a5a5a;-webkit-text-stroke:0.1px #5a5a5a;transform:scaleX(0.9034);transform-origin:0 0">Genlist</div>
<div class="t" style="left:459.00px;top:259.00px;font-size:9.30px;color:#5a5a5a;-webkit-text-stroke:0.1px #5a5a5a;transform:scaleX(0.8722);transform-origin:0 0">Hoversel</div>
<div class="t" style="left:515.13px;top:259.00px;font-size:9.30px;color:#5a5a5a;-webkit-text-stroke:0.1px #5a5a5a;transform:scaleX(0.8680);transform-origin:0 0">Image</div>
<div class="t" style="left:412.20px;top:294.00px;font-size:9.30px;color:#5a5a5a;-webkit-text-stroke:0.1px #5a5a5a;transform:scaleX(0.9045);transform-origin:0 0">Index</div>
<div class="t" style="left:465.50px;top:294.00px;font-size:9.30px;color:#5a5a5a;-webkit-text-stroke:0.1px #5a5a5a;transform:scaleX(0.8217);transform-origin:0 0">Label</div>
<div class="t" style="left:514.60px;top:294.00px;font-size:9.30px;color:#5a5a5a;-webkit-text-stroke:0.1px #5a5a5a;transform:scaleX(0.8571);transform-origin:0 0">Layout</div>
<div class="t" style="left:417.30px;top:330.00px;font-size:9.30px;color:#5a5a5a;-webkit-text-stroke:0.1px #5a5a5a;transform:scaleX(0.7667);transform-origin:0 0">List</div>
<div class="t" style="left:467.30px;top:330.00px;font-size:9.30px;color:#5a5a5a;-webkit-text-stroke:0.1px #5a5a5a;transform:scaleX(0.8722);transform-origin:0 0">Map</div>
<div class="t" style="left:509.30px;top:330.00px;font-size:9.30px;color:#5a5a5a;-webkit-text-stroke:0.1px #5a5a5a;transform:scaleX(0.9486);transform-origin:0 0">Multibu...</div>
</body></html>
